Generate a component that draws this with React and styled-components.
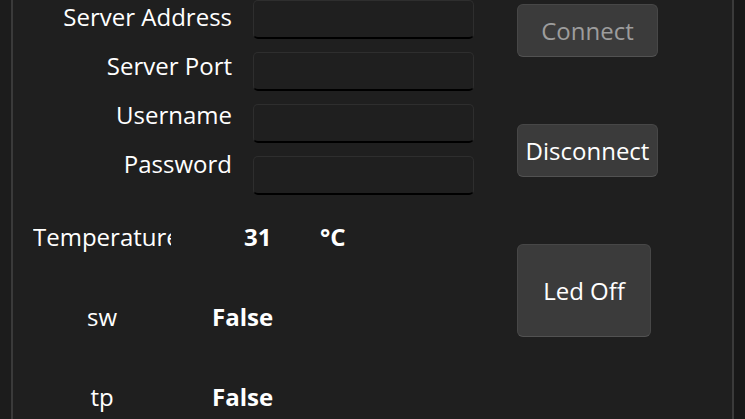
import React from "react";
import styled, { createGlobalStyle } from "styled-components";

const Global = createGlobalStyle`
  html, body {
    margin: 0;
    padding: 0;
    background: #1f1f1f;
    overflow: hidden;
  }
  body {
    font-family: "Open Sans", "Noto Sans", sans-serif;
    color: #ffffff;
  }
`;

const Frame = styled.div`
  display: flex;
  height: 419px;
  width: 745px;
`;

const SideStrip = styled.div`
  width: 11px;
  flex: none;
  background: ${(p) => (p.$right ? "#181818" : "#1c1c1c")};
`;

const Main = styled.main`
  flex: 1;
  display: flex;
  align-items: flex-start;
  background: #1f1f1f;
  border-left: 2px solid #3a3a3a;
  border-right: 2px solid #3a3a3a;
  overflow: hidden;
`;

const LeftArea = styled.div`
  width: 461px;
  display: flex;
  flex-direction: column;
`;

const Form = styled.div`
  display: flex;
  align-items: flex-start;
`;

const LabelColumn = styled.div`
  width: 219px;
  display: flex;
  flex-direction: column;
  align-items: flex-end;
  gap: 17px;
  padding-top: 1px;
`;

const FieldLabel = styled.label`
  font-size: 24px;
  line-height: 32px;
  white-space: nowrap;
  color: #ffffff;
`;

const InputColumn = styled.div`
  width: 221px;
  margin-left: 21px;
  display: flex;
  flex-direction: column;
  gap: 13px;
`;

const TextBox = styled.input`
  box-sizing: border-box;
  width: 221px;
  height: 39px;
  margin: 0;
  padding: 0 10px;
  background: #1f1f1f;
  border: 1px solid #2e2e2e;
  border-bottom: 2px solid #000000;
  border-radius: 5px;
  color: #ffffff;
  font-family: inherit;
  font-size: 20px;
  outline: none;
`;

const Readings = styled.div`
  display: flex;
  flex-direction: column;
  margin-top: 26px;
`;

const ReadingRow = styled.div`
  display: flex;
  align-items: baseline;
  height: 80px;
  font-size: 24px;
  line-height: 32px;
`;

const ReadingLabel = styled.span`
  width: 138px;
  margin-left: 20px;
  flex: none;
  text-align: center;
  white-space: nowrap;
  overflow: hidden;
  color: #ffffff;
`;

const Value = styled.span`
  margin-left: ${(p) => p.$indent}px;
  width: ${(p) => (p.$width ? `${p.$width}px` : "auto")};
  flex: none;
  font-weight: 700;
  color: #ffffff;
`;

const Unit = styled.span`
  font-weight: 700;
  color: #ffffff;
`;

const ButtonColumn = styled.div`
  margin-left: 43px;
  display: flex;
  flex-direction: column;
  align-items: flex-start;
`;

const ActionButton = styled.button`
  box-sizing: border-box;
  width: ${(p) => p.$w}px;
  height: ${(p) => p.$h}px;
  margin: ${(p) => p.$top}px 0 0 0;
  padding: 0;
  background: #3b3b3b;
  border: 1px solid #474747;
  border-bottom-color: #525252;
  border-radius: 6px;
  color: ${(p) => (p.disabled ? "#9d9d9d" : "#ffffff")};
  font-family: inherit;
  font-size: 24px;
  line-height: 32px;
  white-space: nowrap;
  display: flex;
  align-items: center;
  justify-content: center;
  cursor: default;
`;

export default function App() {
  return (
    <>
      <Global />
      <Frame>
        <SideStrip />
        <Main>
          <LeftArea>
            <Form>
              <LabelColumn>
                <FieldLabel>Server Address</FieldLabel>
                <FieldLabel>Server Port</FieldLabel>
                <FieldLabel>Username</FieldLabel>
                <FieldLabel>Password</FieldLabel>
              </LabelColumn>
              <InputColumn>
                <TextBox aria-label="Server Address" />
                <TextBox aria-label="Server Port" />
                <TextBox aria-label="Username" />
                <TextBox aria-label="Password" type="password" />
              </InputColumn>
            </Form>
            <Readings>
              <ReadingRow>
                <ReadingLabel>Temperature</ReadingLabel>
                <Value $indent={73} $width={76}>31</Value>
                <Unit>°C</Unit>
              </ReadingRow>
              <ReadingRow>
                <ReadingLabel>sw</ReadingLabel>
                <Value $indent={41}>False</Value>
              </ReadingRow>
              <ReadingRow>
                <ReadingLabel>tp</ReadingLabel>
                <Value $indent={41}>False</Value>
              </ReadingRow>
            </Readings>
          </LeftArea>
          <ButtonColumn>
            <ActionButton $w={141} $h={53} $top={4} disabled>
              Connect
            </ActionButton>
            <ActionButton $w={141} $h={53} $top={67}>
              Disconnect
            </ActionButton>
            <ActionButton $w={134} $h={93} $top={67}>
              Led Off
            </ActionButton>
          </ButtonColumn>
        </Main>
        <SideStrip $right />
      </Frame>
    </>
  );
}
